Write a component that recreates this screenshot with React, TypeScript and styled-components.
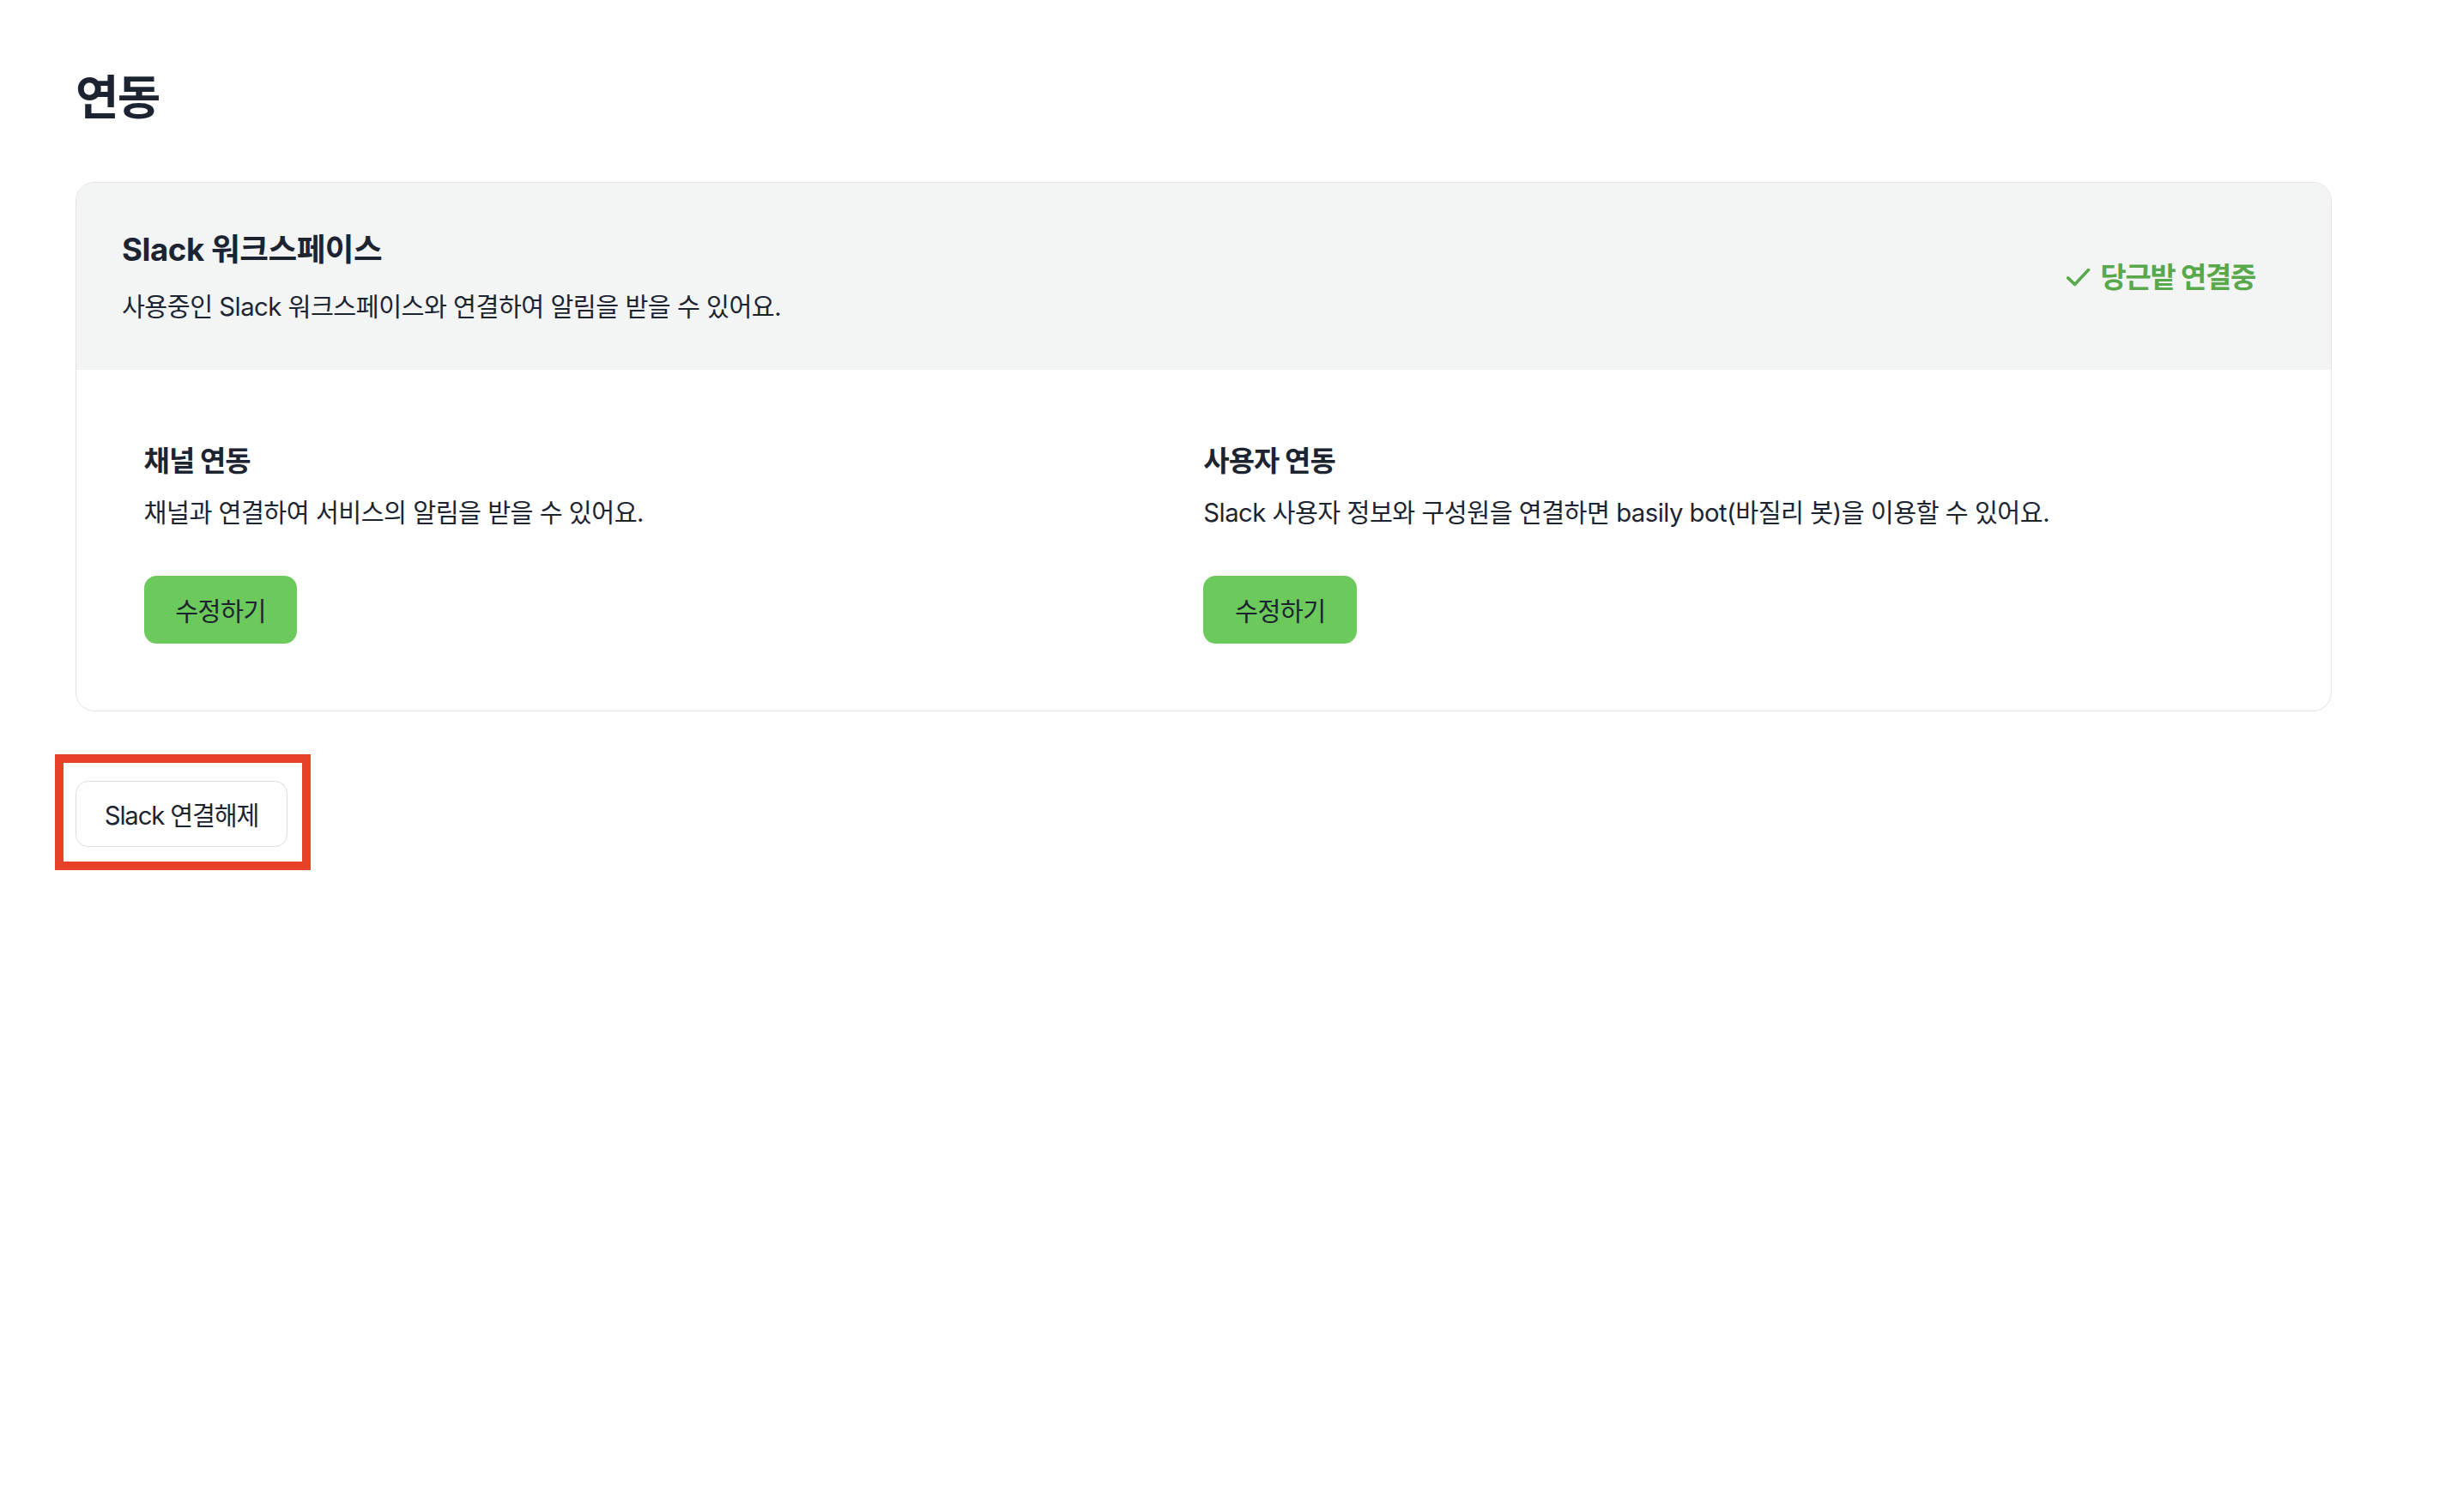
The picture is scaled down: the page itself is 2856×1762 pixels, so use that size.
import React from "react";
import styled, { createGlobalStyle } from "styled-components";

// screenshot was taken at ~1.83x, so everything below is in css px and scaled once
const GlobalStyle = createGlobalStyle`
  html, body {
    margin: 0;
    padding: 0;
    background: #ffffff;
  }
  body {
    font-family: "Inter", "Noto Sans CJK KR", sans-serif;
    color: #1c2431;
    -webkit-font-smoothing: antialiased;
  }
`;

const Page = styled.div`
  zoom: 1.8308;
  padding: 44px 76px 40px 48px;
  letter-spacing: -0.018em;
`;

const Title = styled.h1`
  margin: 0 0 36px;
  font-size: 30px;
  line-height: 36px;
  font-weight: 700;
  letter-spacing: -0.03em;
  color: #1c2431;
`;

const Card = styled.section`
  border: 1px solid #e2e3e8;
  border-radius: 12px;
  overflow: hidden;
  background: #ffffff;
`;

const CardHeader = styled.div`
  display: flex;
  align-items: center;
  justify-content: space-between;
  background: #f3f5f5;
  padding: 29px 48px 28px 29px;
`;

const HeaderTitle = styled.h2`
  margin: 0;
  font-size: 20px;
  line-height: 28px;
  font-weight: 700;
  letter-spacing: -0.012em;
`;

const Desc = styled.p<{ $gap?: number }>`
  margin: ${(p) => p.$gap ?? 10}px 0 0;
  font-size: 16px;
  line-height: 24px;
  font-weight: 400;
  color: #1c2431;
`;

const Status = styled.div`
  display: flex;
  align-items: center;
  gap: 6px;
  color: #59a84b;
  font-size: 18px;
  line-height: 28px;
  font-weight: 700;
  letter-spacing: -0.04em;
`;

const CardBody = styled.div`
  display: grid;
  grid-template-columns: 1fr 1fr;
  padding: 44px 43px 43px 43px;
`;

const Column = styled.div`
  display: flex;
  flex-direction: column;
  align-items: flex-start;
`;

const ColTitle = styled.h3`
  margin: 0;
  font-size: 18px;
  line-height: 28px;
  font-weight: 700;
  letter-spacing: -0.03em;
`;

const GreenButton = styled.button`
  margin-top: 28px;
  height: 43px;
  padding: 0 20px;
  border: none;
  border-radius: 8px;
  background: #6cc95b;
  color: #1c2431;
  font-family: inherit;
  font-size: 16px;
  letter-spacing: -0.018em;
  cursor: pointer;
`;

const Highlight = styled.div`
  position: relative;
  display: inline-block;
  margin-top: 44px;

  &::after {
    content: "";
    position: absolute;
    top: -17px;
    left: -13px;
    right: -14.5px;
    bottom: -15px;
    border: 5.5px solid #e8412a;
    pointer-events: none;
  }
`;

const OutlineButton = styled.button`
  display: block;
  height: 42px;
  padding: 0 18px;
  border: 1px solid #dcdde3;
  border-radius: 8px;
  background: #ffffff;
  color: #1c2431;
  font-family: inherit;
  font-size: 16px;
  letter-spacing: -0.04em;
  cursor: pointer;
`;

const Check = () => (
  <svg width="16" height="12" viewBox="0 0 16 12" fill="none">
    <path d="M1.5 6.5 L5.8 10.6 L14.5 1.4" stroke="#59a84b" strokeWidth="2" strokeLinecap="round" strokeLinejoin="round" />
  </svg>
);

const sections = [
  {
    title: "채널 연동",
    desc: "채널과 연결하여 서비스의 알림을 받을 수 있어요.",
  },
  {
    title: "사용자 연동",
    desc: "Slack 사용자 정보와 구성원을 연결하면 basily bot(바질리 봇)을 이용할 수 있어요.",
  },
];

export default function App() {
  return (
    <>
      <GlobalStyle />
      <Page>
        <Title>연동</Title>
        <Card>
          <CardHeader>
            <div>
              <HeaderTitle>Slack 워크스페이스</HeaderTitle>
              <Desc>사용중인 Slack 워크스페이스와 연결하여 알림을 받을 수 있어요.</Desc>
            </div>
            <Status>
              <Check />
              <span>당근밭 연결중</span>
            </Status>
          </CardHeader>
          <CardBody>
            {sections.map((s) => (
              <Column key={s.title}>
                <ColTitle>{s.title}</ColTitle>
                <Desc $gap={7}>{s.desc}</Desc>
                <GreenButton>수정하기</GreenButton>
              </Column>
            ))}
          </CardBody>
        </Card>
        <Highlight>
          <OutlineButton>Slack 연결해제</OutlineButton>
        </Highlight>
      </Page>
    </>
  );
}
